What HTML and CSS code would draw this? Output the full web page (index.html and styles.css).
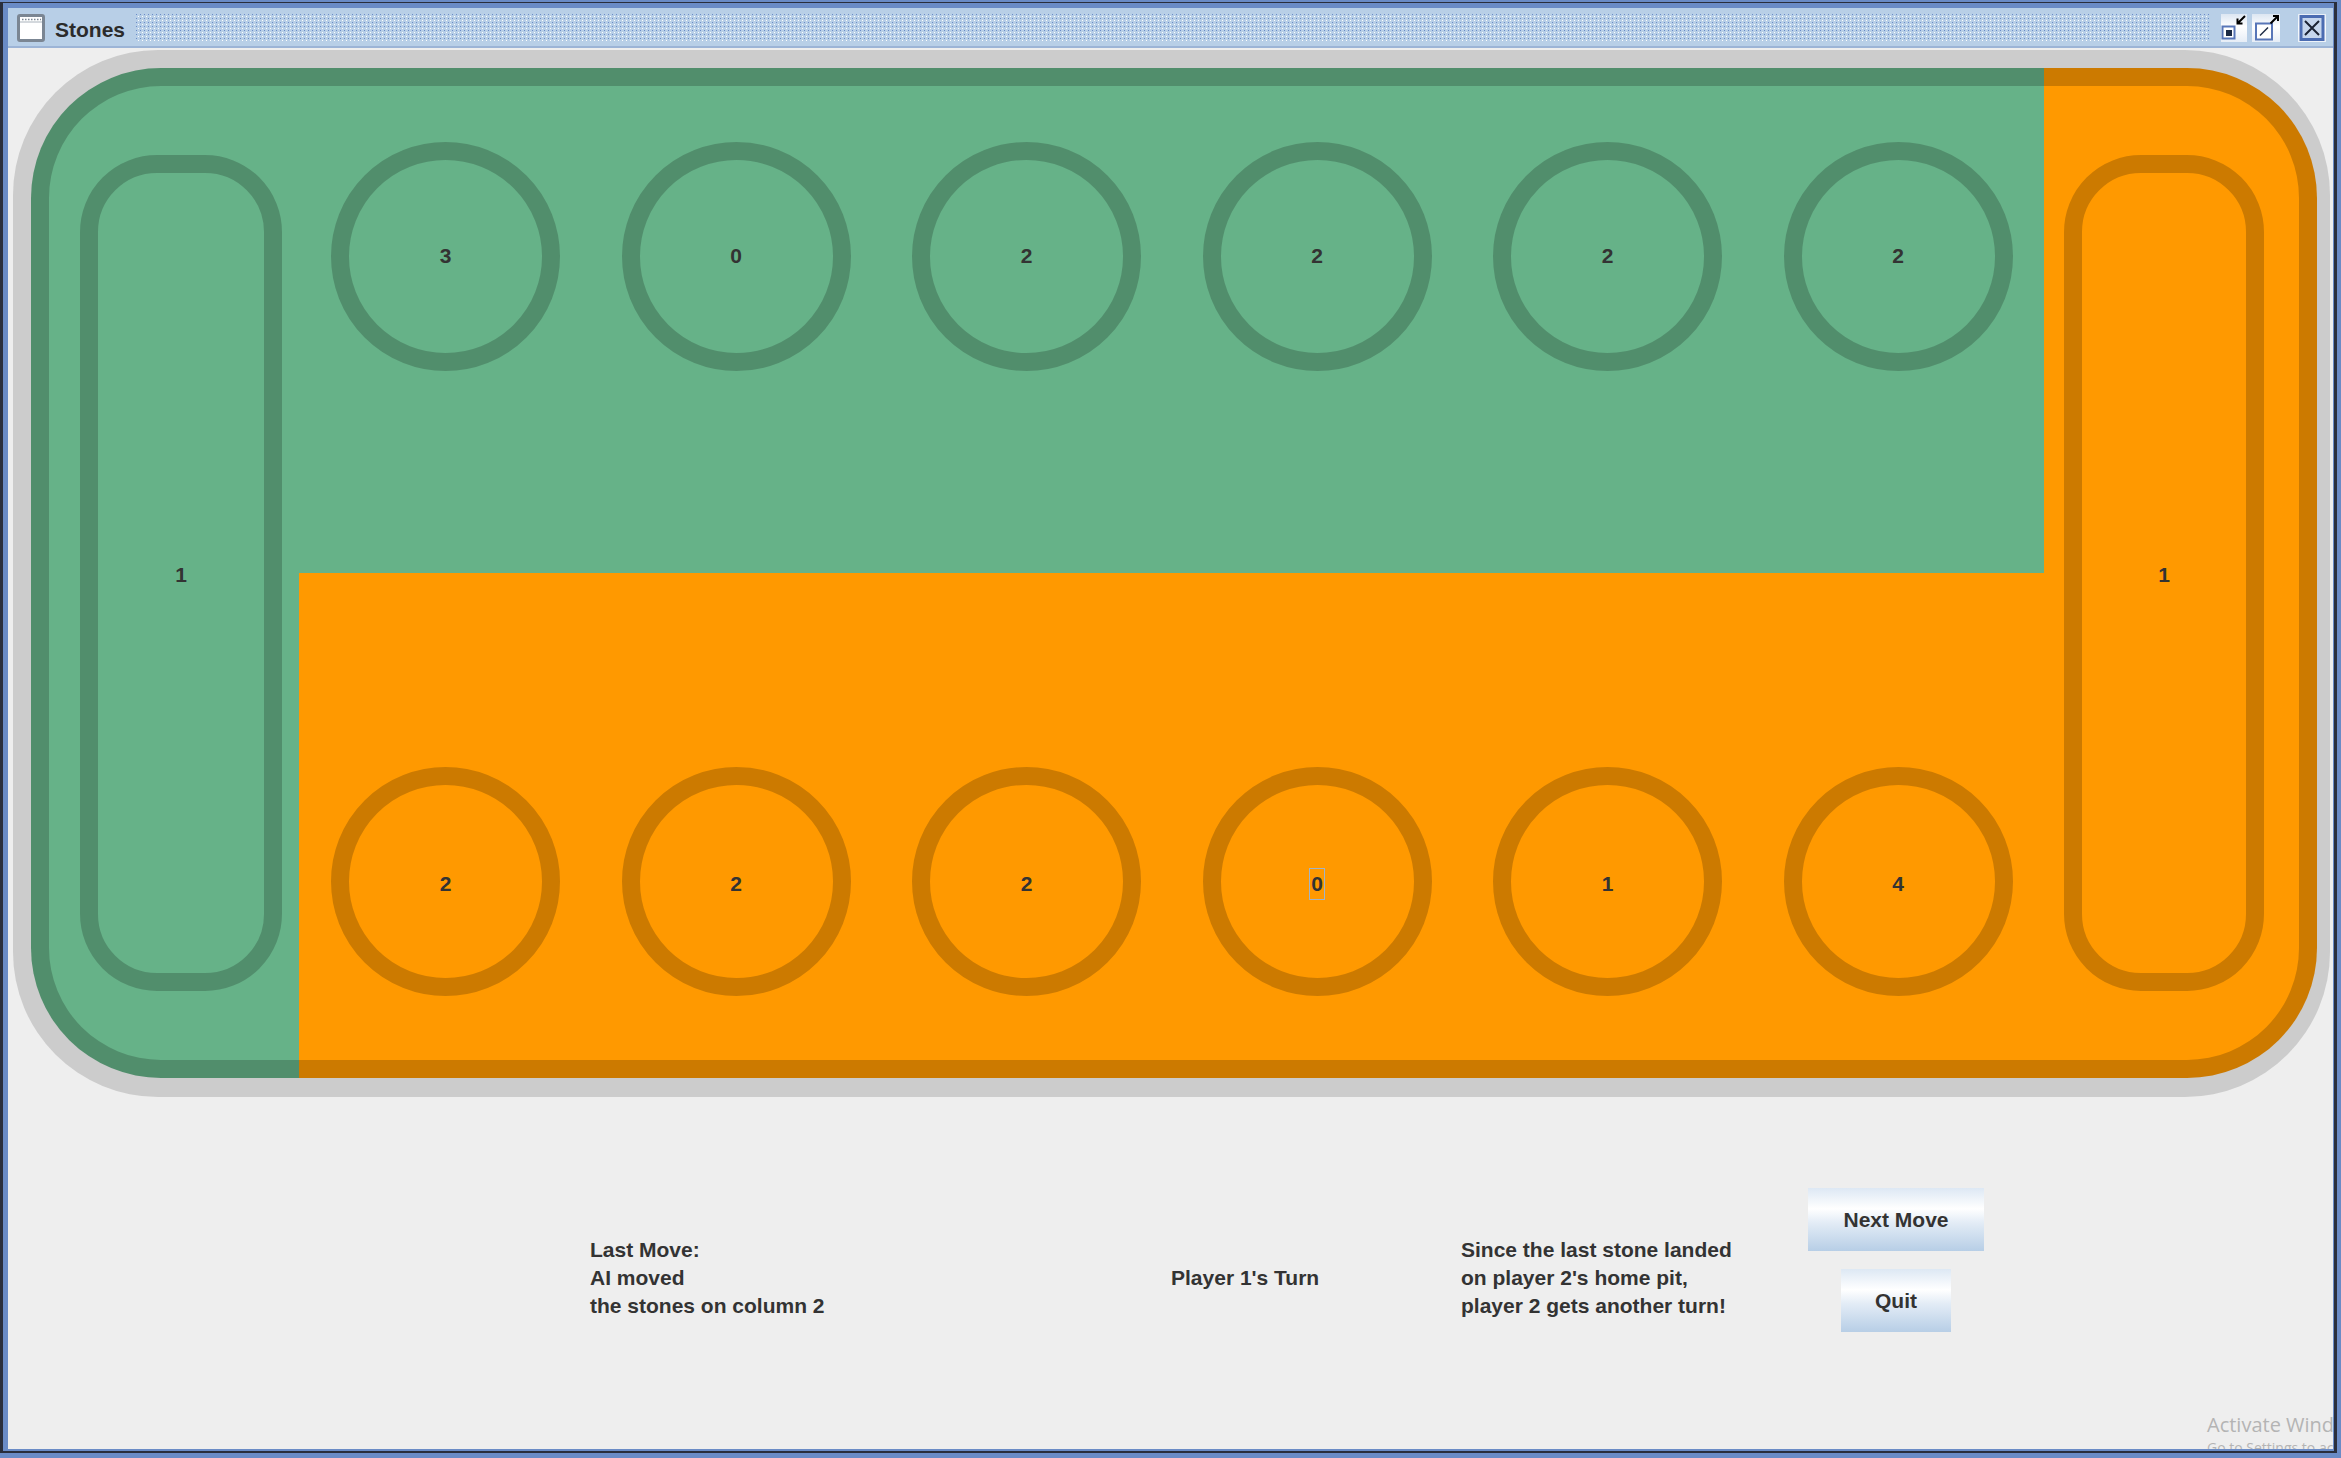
FILE: index.html
```html
<!DOCTYPE html>
<html>
<head>
<meta charset="utf-8">
<title>Stones</title>
<link rel="stylesheet" href="styles.css">
</head>
<body>
<div class="window">
  <div class="frame">
    <div class="titlebar">
      <svg class="app-icon" width="28" height="28" viewBox="0 0 28 28">
        <rect x="1.5" y="1.5" width="25" height="25" rx="1.5" fill="#ffffff" stroke="#7b8693" stroke-width="3"/>
        <line x1="5" y1="5.5" x2="24" y2="5.5" stroke="#7b8693" stroke-width="1.5" stroke-dasharray="1.5 1.5"/>
        <line x1="3" y1="8" x2="25" y2="8" stroke="#a9b2bb" stroke-width="1"/>
      </svg>
      <span class="title">Stones</span>
      <div class="grip"></div>
      <div class="tb tb-min">
        <svg width="26" height="28" viewBox="0 0 26 28">
          <rect x="1.5" y="12.5" width="12" height="12" fill="#ffffff" stroke="#5876b8" stroke-width="2"/>
          <rect x="5" y="16" width="6" height="6" fill="#1d2a44"/>
          <path d="M24 2 L16.5 9.5 M16.5 4.5 V9.5 H21.5" stroke="#000" stroke-width="2" fill="none"/>
        </svg>
      </div>
      <div class="tb tb-max">
        <svg width="28" height="28" viewBox="0 0 28 28">
          <rect x="4" y="9.5" width="16" height="16" fill="#ffffff" stroke="#5876b8" stroke-width="2"/>
          <path d="M8 21.5 L16 13.5" stroke="#1d2a44" stroke-width="1.5"/>
          <path d="M18.5 9.5 L26 2 M21 2 H26 V7" stroke="#000" stroke-width="2" fill="none"/>
        </svg>
      </div>
      <div class="tb tb-close">
        <svg width="28" height="28" viewBox="0 0 28 28">
          <rect x="0.5" y="0.5" width="27" height="27" fill="#f4f7fb"/>
          <rect x="3" y="2.5" width="22" height="23" fill="#c6d6ed" stroke="#4b6cb2" stroke-width="3"/>
          <path d="M7 7 L21 21 M21 7 L7 21" stroke="#1b2233" stroke-width="2"/>
        </svg>
      </div>
    </div>

    <div class="content">
      <div class="shadow">
        <div class="board">
          <div class="home"><span class="num">1</span></div>
          <div class="pits">
            <div class="row">
              <div class="pit"><span class="num">3</span></div>
              <div class="pit"><span class="num">0</span></div>
              <div class="pit"><span class="num">2</span></div>
              <div class="pit"><span class="num">2</span></div>
              <div class="pit"><span class="num">2</span></div>
              <div class="pit"><span class="num">2</span></div>
            </div>
            <div class="row row-low">
              <div class="pit"><span class="num">2</span></div>
              <div class="pit"><span class="num">2</span></div>
              <div class="pit"><span class="num">2</span></div>
              <div class="pit"><span class="num focus">0</span></div>
              <div class="pit"><span class="num">1</span></div>
              <div class="pit"><span class="num">4</span></div>
            </div>
          </div>
          <div class="home home-right"><span class="num">1</span></div>
        </div>
      </div>

      <div class="controls">
        <div class="info last">
          <div>Last Move:</div>
          <div>AI moved</div>
          <div>the stones on column 2</div>
        </div>
        <div class="info turn">Player 1's Turn</div>
        <div class="info since">
          <div>Since the last stone landed</div>
          <div>on player 2's home pit,</div>
          <div>player 2 gets another turn!</div>
        </div>
        <div class="buttons">
          <div class="btn btn-next">Next Move</div>
          <div class="btn btn-quit">Quit</div>
        </div>
      </div>

      <div class="watermark">
        <div class="wm-big">Activate Windows</div>
        <div class="wm-small">Go to Settings to activate Windows.</div>
      </div>
    </div>
  </div>
</div>
</body>
</html>
```

FILE: styles.css
```css
html, body {
  margin: 0;
  padding: 0;
  overflow: hidden;
}

body {
  font-family: "Liberation Sans", Arial, sans-serif;
  color: #333333;
}

.window {
  width: 2341px;
  height: 1458px;
  box-sizing: border-box;
  padding: 2px 4px 5px 0;
  background: #6a8bc6;
}

.frame {
  box-sizing: border-box;
  height: 100%;
  border-style: solid;
  border-color: #2a2e3c;
  border-width: 1px 3px 2px 3px;
  padding: 5px 1px 2px 5px;
  background: #6a8bc6;
  display: flex;
  flex-direction: column;
}

/* ---------- title bar ---------- */
.titlebar {
  flex: none;
  height: 38px;
  border-bottom: 2px solid #9cb4d6;
  background: #b8cfe7;
  display: flex;
  align-items: center;
  padding: 0 7px 0 9px;
}

.app-icon {
  flex: none;
  display: block;
  margin-top: 2px;
}

.title {
  margin-left: 10px;
  margin-top: 5px;
  font-weight: bold;
  font-size: 21px;
  color: #2b2b2b;
}

.grip {
  flex: 1;
  height: 28px;
  margin: 2px 11px 0 11px;
  background:
    conic-gradient(from 270deg at 1px 1px, #6a8bc9 25%, transparent 0) 0 0 / 4px 4px,
    conic-gradient(from 270deg at 1px 1px, #ffffff 25%, transparent 0) 2px 2px / 4px 4px,
    #b8cfe7;
}

.tb {
  flex: none;
  height: 28px;
  margin-top: 2px;
  background: linear-gradient(#dce6f2, #ffffff 45%, #e6edf6);
}

.tb svg {
  display: block;
}

.tb-min {
  width: 26px;
}

.tb-max {
  width: 28px;
  margin-left: 5px;
}

.tb-close {
  width: 28px;
  margin-left: 18px;
}

/* ---------- content ---------- */
.content {
  flex: 1;
  position: relative;
  overflow: hidden;
  background: #eeeeee;
  display: flex;
  flex-direction: column;
}

.shadow {
  flex: none;
  margin: 2px 3px 0 5px;
  padding: 18px 13px 19px 18px;
  background: #cccccc;
  border-radius: 145px;
}

.board {
  box-sizing: border-box;
  height: 1010px;
  border: 18px solid rgba(0, 0, 0, 0.2);
  border-radius: 130px;
  background:
    linear-gradient(#66b288, #66b288) 0 0 / 2013px 505px no-repeat,
    linear-gradient(#66b288, #66b288) 0 0 / 268px 100% no-repeat,
    #ff9900;
  background-origin: border-box;
  display: flex;
  align-items: center;
  padding: 0 35px 0 31px;
}

.home {
  flex: none;
  box-sizing: border-box;
  width: 202px;
  height: 836px;
  border: 18px solid rgba(0, 0, 0, 0.2);
  border-radius: 77px;
  display: flex;
  align-items: center;
  justify-content: center;
  padding-top: 3px;
}

.home-right {
  width: 200px;
  margin-left: 51.5px;
}

.pits {
  flex: none;
  margin-left: 49px;
  align-self: stretch;
  display: flex;
  flex-direction: column;
  padding-top: 55.5px;
  gap: 396.5px;
}

.row {
  display: flex;
  gap: 61.5px;
}

.pit {
  flex: none;
  box-sizing: border-box;
  width: 229px;
  height: 229px;
  border-radius: 50%;
  border: 18px solid rgba(0, 0, 0, 0.2);
  display: flex;
  align-items: center;
  justify-content: center;
}

.row-low .pit {
  padding-top: 4px;
}

.num {
  font-weight: bold;
  font-size: 21px;
  color: #333333;
}

.focus {
  border: 1px solid #a2b4c7;
  padding: 0 1.5px;
  line-height: 30px;
}

/* ---------- controls ---------- */
.controls {
  display: grid;
  grid-template-columns: 581px 290px 347px 176px;
  padding-left: 582px;
  align-items: start;
}

.info {
  font-weight: bold;
  font-size: 21px;
  line-height: 28px;
  color: #333333;
  white-space: nowrap;
}

.last {
  margin-top: 139px;
}

.turn {
  margin-top: 167px;
}

.since {
  margin-top: 139px;
}

.buttons {
  margin-top: 91px;
  display: flex;
  flex-direction: column;
  align-items: center;
  gap: 18px;
}

.btn {
  height: 63px;
  display: flex;
  align-items: center;
  justify-content: center;
  font-weight: bold;
  font-size: 21px;
  color: #333333;
  background: linear-gradient(#dde8f4, #ffffff 33%, #e3ecf6 55%, #b7cee6);
}

.btn-next {
  width: 176px;
}

.btn-quit {
  width: 110px;
}

/* ---------- watermark ---------- */
.watermark {
  position: absolute;
  left: 2199px;
  top: 1365px;
  font-family: "Open Sans", "Noto Sans", sans-serif;
  color: #b4b4b4;
  white-space: nowrap;
}

.wm-big {
  font-size: 20px;
  line-height: 24px;
}

.wm-small {
  font-size: 14px;
  line-height: 18px;
  margin-top: 2px;
}
```
